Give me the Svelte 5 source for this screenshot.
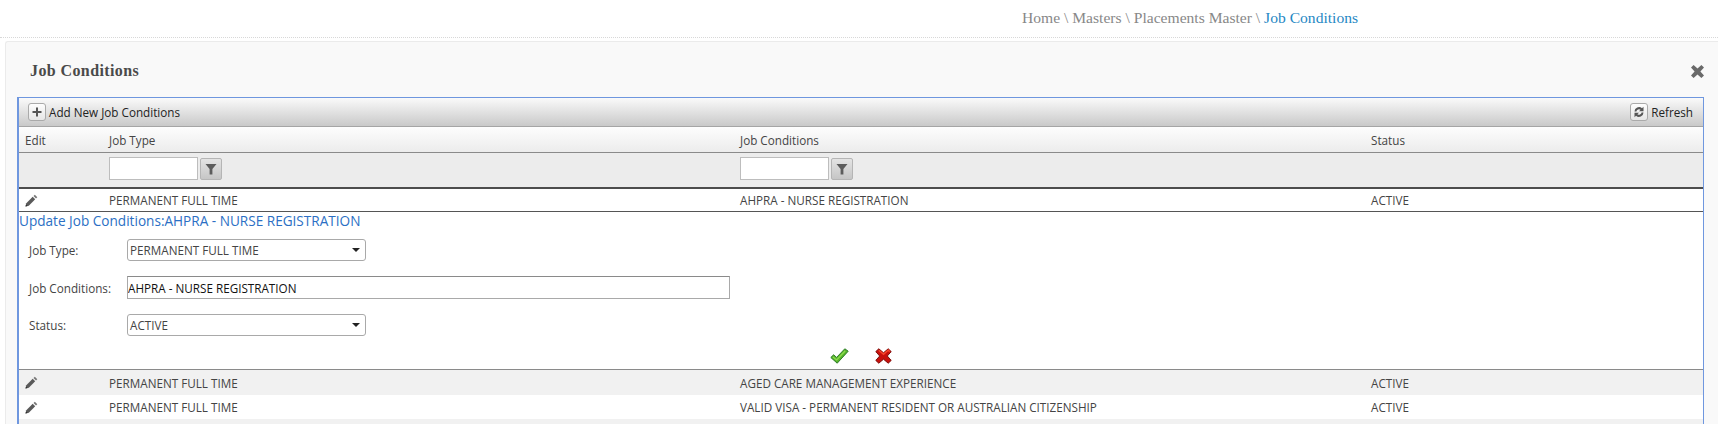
<script>
  const columns = ['Job Type', 'Job Conditions', 'Status'];
  const firstRow = { type: 'PERMANENT FULL TIME', condition: 'AHPRA - NURSE REGISTRATION', status: 'ACTIVE' };
  const otherRows = [
    { type: 'PERMANENT FULL TIME', condition: 'AGED CARE MANAGEMENT EXPERIENCE', status: 'ACTIVE' },
    { type: 'PERMANENT FULL TIME', condition: 'VALID VISA - PERMANENT RESIDENT OR AUSTRALIAN CITIZENSHIP', status: 'ACTIVE' }
  ];
</script>

{#snippet pencil()}
  <svg width="13" height="13" viewBox="0 0 13 13">
    <path d="M.5 12.500l.8-3.300 6.400-6.400 2.500 2.500-6.400 6.400z" fill="#5a5a5a" />
    <path d="M8.500 2l1.300-1.300 2.500 2.500L11 4.500z" fill="#777" />
    <path d="M.5 12.500l.5-2 1.500 1.500z" fill="#2a2a2a" />
  </svg>
{/snippet}

{#snippet funnel()}
  <button class="filter-btn" type="button" aria-label="Filter">
    <svg width="12" height="12" viewBox="0 0 12 12"><path d="M.5 1h11L7.400 6v5.400H4.600V6z" fill="#5c5c5c" /></svg>
  </button>
{/snippet}

{#snippet row(item, cls)}
  <div class="row item {cls}">
    <div class="cell">{@render pencil()}</div>
    <div class="cell">{item.type}</div>
    <div class="cell">{item.condition}</div>
    <div class="cell">{item.status}</div>
  </div>
{/snippet}

<header class="crumbs">
  <span>Home \ Masters \ Placements Master \&nbsp;</span><span class="current">Job Conditions</span>
</header>

<main class="panel">
  <div class="panel-head">
    <h2>Job Conditions</h2>
    <svg class="close" width="13" height="13" viewBox="0 0 13 13">
      <path d="M2.600 0L6.500 3.600 10.400 0 13 2.600 9.400 6.500 13 10.400 10.400 13 6.500 9.400 2.600 13 0 10.400 3.600 6.500 0 2.600z" fill="#6a6a6a" />
    </svg>
  </div>

  <section class="grid">
    <div class="toolbar">
      <button class="tool" type="button">
        <span class="tool-icon">
          <svg width="10" height="10" viewBox="0 0 10 10"><path d="M4 .5h2V4h3.500v2H6v3.500H4V6H.5V4H4z" fill="#555" /></svg>
        </span>
        Add New Job Conditions
      </button>
      <button class="tool" type="button">
        <span class="tool-icon">
          <svg width="12" height="12" viewBox="0 0 12 12">
            <path d="M1.500 5.500A4.500 4.500 0 0 1 9 2.200L10.500.8v4.500H6L7.600 3.700A2.700 2.700 0 0 0 3.400 5.500z" fill="#555" />
            <path d="M10.500 6.500A4.500 4.500 0 0 1 3 9.800L1.500 11.200V6.700H6L4.400 8.300A2.700 2.700 0 0 0 8.600 6.500z" fill="#555" />
          </svg>
        </span>
        Refresh
      </button>
    </div>

    <div class="row head">
      <div class="cell">Edit</div>
      {#each columns as col}
        <div class="cell">{col}</div>
      {/each}
    </div>

    <div class="row filters">
      <div class="cell"></div>
      <div class="cell filter"><input type="text" />{@render funnel()}</div>
      <div class="cell filter"><input type="text" />{@render funnel()}</div>
      <div class="cell"></div>
    </div>

    {@render row(firstRow, 'selected')}

    <form class="editor">
      <div class="editor-title">Update Job Conditions:AHPRA - NURSE REGISTRATION</div>
      <div class="field first">
        <span class="label">Job Type:</span>
        <div class="select">PERMANENT FULL TIME<i class="caret"></i></div>
      </div>
      <div class="field second">
        <span class="label">Job Conditions:</span>
        <input class="text" type="text" value="AHPRA - NURSE REGISTRATION" />
      </div>
      <div class="field third">
        <span class="label">Status:</span>
        <div class="select">ACTIVE<i class="caret"></i></div>
      </div>
      <div class="actions">
        <svg width="19" height="16" viewBox="0 0 19 16">
          <path d="M.8 9.500l2.800-2.700 3 2.600L14.800.8l3.400 2.400L7.200 15.200z" fill="#58b52c" stroke="#2f7d2a" stroke-width="1" stroke-linejoin="round" />
          <path d="M3 9l3.700 3 8.400-9" fill="none" stroke="#8fdc4e" stroke-width="1.200" />
        </svg>
        <svg width="17" height="16" viewBox="0 0 17 16">
          <path d="M.8 3.600L3.800.8l4.700 4L13.200.8l3 2.800L12.300 8l3.900 4.400-3 2.800-4.700-4-4.700 4-3-2.800L4.700 8z" fill="#c7100c" stroke="#7c0f0c" stroke-width="1" stroke-linejoin="round" />
          <path d="M3.800 2.200l4.700 4 4.700-4 1.500 1.400" fill="none" stroke="#f8452c" stroke-width="1.500" />
        </svg>
      </div>
    </form>

    {#each otherRows as item, i}
      {@render row(item, i % 2 === 0 ? 'alt' : '')}
    {/each}
    <div class="row item alt"></div>
  </section>
</main>

<style>
  :global(body) {
    margin: 0;
    background: #fff;
    overflow: hidden;
  }

  .crumbs {
    height: 38px;
    box-sizing: border-box;
    padding: 9px 0 0 1022px;
    border-bottom: 1px dotted #d8d8d8;
    font: 15.600px "Liberation Serif", serif;
    line-height: 18px;
    color: #888;
    white-space: nowrap;
  }

  .current {
    color: #1f88c4;
  }

  .panel {
    margin: 3px 0 0 5px;
    height: 383px;
    box-sizing: border-box;
    padding: 0 14px 0 11px;
    background: #f9f9f9;
    border: 1px solid #ebebeb;
    border-bottom: 0;
    border-right: 0;
    border-radius: 3px 0 0 0;
    font: 11.700px "Open Sans", sans-serif;
    color: #444;
  }

  .panel-head {
    height: 55px;
    display: flex;
    align-items: center;
    justify-content: space-between;
  }

  .panel-head h2 {
    margin: 3px 0 0 13px;
    font: bold 16px "Liberation Serif", serif;
    letter-spacing: 0.4px;
    color: #4a4a4a;
  }

  .close {
    margin: 3px 0 0 0;
  }

  .grid {
    height: 327px;
    overflow: hidden;
    background: #fff;
    border: 1px solid #6f97df;
    border-left-width: 2px;
    border-bottom: 0;
  }

  .toolbar {
    height: 29px;
    box-sizing: border-box;
    display: flex;
    align-items: center;
    justify-content: space-between;
    padding: 0 10px 0 9px;
    background: linear-gradient(#fafafa, #c9c9c9);
    border-bottom: 1px solid #a5a5a5;
  }

  .tool {
    display: flex;
    align-items: center;
    gap: 3px;
    padding: 0;
    border: 0;
    background: none;
    font: inherit;
    color: #222;
  }

  .tool-icon {
    width: 18px;
    height: 18px;
    box-sizing: border-box;
    display: flex;
    align-items: center;
    justify-content: center;
    border: 1px solid #aaa;
    border-radius: 3px;
    background: linear-gradient(#fdfdfd, #e6e6e6);
  }

  .row {
    display: grid;
    grid-template-columns: 84px 631px 631px 1fr;
    align-items: center;
  }

  .cell {
    padding-left: 6px;
    white-space: nowrap;
    display: flex;
    align-items: center;
  }

  .head {
    height: 26px;
    box-sizing: border-box;
    background: linear-gradient(#fdfdfd, #ececec);
    border-bottom: 1px solid #8a8a8a;
  }

  .filters {
    height: 36px;
    box-sizing: border-box;
    padding-bottom: 3px;
    background: #ececec;
    border-bottom: 2px solid #4d4d4d;
  }

  .filter {
    gap: 2px;
  }

  .filter input {
    width: 89px;
    height: 23px;
    box-sizing: border-box;
    margin: 0;
    padding: 0;
    border: 1px solid #bdbdbd;
    background: #fff;
  }

  .filter-btn {
    width: 22px;
    height: 22px;
    padding: 0;
    display: flex;
    align-items: center;
    justify-content: center;
    border: 1px solid #b5b5b5;
    border-radius: 2px;
    background: linear-gradient(#e4e4e4, #c6c6c6);
  }

  .item {
    height: 24.500px;
    box-sizing: border-box;
    padding-top: 1px;
  }

  .selected {
    height: 23px;
    padding-top: 0;
    border-bottom: 1px solid #555;
  }

  .alt {
    background: #f1f1f1;
  }

  .editor {
    height: 158px;
    box-sizing: border-box;
    border-bottom: 1px solid #8a8a8a;
  }

  .editor-title {
    height: 18px;
    line-height: 18px;
    font-size: 13.600px;
    color: #2b6fc4;
    white-space: nowrap;
  }

  .field {
    display: flex;
    align-items: center;
    padding-left: 10px;
  }

  .first { margin-top: 9px; }
  .second { margin-top: 15px; }
  .third { margin-top: 15px; }

  .label {
    width: 98px;
  }

  .select {
    width: 239px;
    height: 22px;
    box-sizing: border-box;
    padding-left: 2px;
    display: flex;
    align-items: center;
    justify-content: space-between;
    border: 1px solid #a9a9a9;
    border-radius: 3px;
    background: #fff;
  }

  .caret {
    margin-right: 5px;
    border: 4px solid transparent;
    border-top-color: #222;
    border-bottom: 0;
  }

  .text {
    width: 603px;
    height: 23px;
    box-sizing: border-box;
    margin: 0;
    padding: 0;
    border: 1px solid #a9a9a9;
    border-top-color: #8a8a8a;
    font: inherit;
    color: #111;
  }

  .actions {
    margin-top: 12px;
    padding-left: 811px;
    display: flex;
    gap: 26px;
    align-items: center;
  }
</style>
